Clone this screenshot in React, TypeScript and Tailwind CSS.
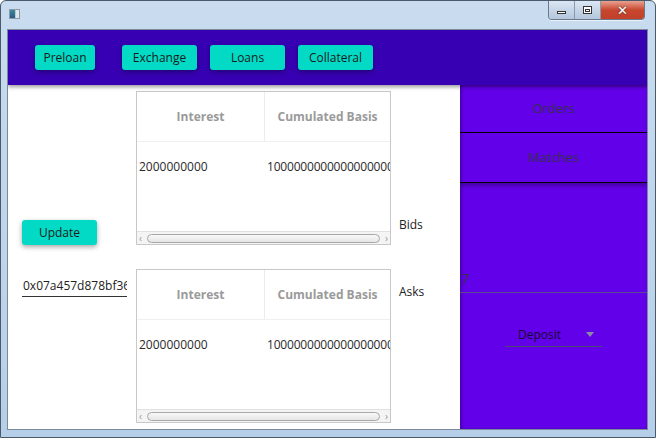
import React from "react";

const font = { fontFamily: '"Open Sans", "Noto Sans", "DejaVu Sans", sans-serif' };

function Table() {
  return (
    <div className="w-[255px] h-[154px] border border-[#c8c8c8] bg-white flex flex-col overflow-hidden">
      <div className="flex h-[50px] border-b border-[#f0f0f0] shrink-0">
        <div className="w-[128px] shrink-0 border-r border-[#ececec] flex items-center justify-center text-[12px] font-bold text-[#9a9a9a]">
          Interest
        </div>
        <div className="flex-1 flex items-center justify-center text-[12px] font-bold text-[#9a9a9a] whitespace-nowrap">
          Cumulated Basis
        </div>
      </div>
      <div className="flex-1 relative overflow-hidden">
        <div className="flex h-[50px] items-center text-[12px] text-[#2a2a2a] whitespace-nowrap">
          <div className="w-[128px] shrink-0 pl-[2px]">2000000000</div>
          <div className="shrink-0 pl-[2px] tracking-[-0.2px]">1000000000000000000</div>
        </div>
      </div>
      <div className="h-[13px] shrink-0 bg-[#f4f4f4] border-t border-[#e0e0e0] flex items-center px-[2px] gap-[2px]">
        <span className="text-[10px] leading-none text-[#9a9a9a] w-[6px]">‹</span>
        <div className="flex-1 h-[9px] rounded-[5px] border border-[#a8a8a8] bg-gradient-to-b from-[#f8f8f8] to-[#e6e6e6]" />
        <span className="text-[10px] leading-none text-[#9a9a9a] w-[6px] text-right">›</span>
      </div>
    </div>
  );
}

function TealButton({ label, w }: { label: string; w: string }) {
  return (
    <div
      className={`${w} h-[25px] shrink-0 rounded-[3px] bg-[#03dac5] flex items-center justify-center text-[12px] text-[#1a1a1a] shadow-[0_2px_5px_rgba(0,0,0,0.35)]`}
    >
      {label}
    </div>
  );
}

export default function App() {
  return (
    <div className="w-[656px] h-[438px] overflow-hidden bg-white" style={font}>
      <div className="w-[656px] h-[438px] rounded-t-[6px] border border-[#4a5a6a] bg-gradient-to-b from-[#c9dcef] to-[#b6cfe8] flex flex-col overflow-hidden">
        {/* title bar */}
        <div className="h-[28px] shrink-0 flex items-start justify-between relative">
          <div className="mt-[8px] ml-[8px] w-[11px] h-[10px] border border-[#8c9aa8] bg-white flex">
            <div className="w-[5px] h-full bg-gradient-to-b from-[#3a8a9a] to-[#2a5a8a]" />
            <div className="w-[1px] h-full bg-[#c0c8d0]" />
            <div className="flex-1 h-full bg-[#dfe8ef]" />
          </div>
          <div className="flex mr-[10px] h-[19px] rounded-b-[4px] overflow-hidden border border-t-0 border-[#6a7a8c] shadow-[0_1px_0_rgba(255,255,255,0.6)]">
            <div className="w-[26px] h-full bg-gradient-to-b from-[#dbe6f2] to-[#b3c6dc] border-r border-[#8a9aac] flex items-center justify-center">
              <div className="w-[9px] h-[3px] border border-[#333] bg-white mt-[5px]" />
            </div>
            <div className="w-[26px] h-full bg-gradient-to-b from-[#dbe6f2] to-[#b3c6dc] border-r border-[#8a9aac] flex items-center justify-center">
              <div className="w-[9px] h-[8px] border border-[#333] bg-white flex items-center justify-center">
                <div className="w-[5px] h-[3px] border border-[#333]" />
              </div>
            </div>
            <div className="w-[43px] h-full bg-gradient-to-b from-[#e8a090] via-[#c8462e] to-[#c0402a] flex items-center justify-center">
              <span className="text-white font-bold text-[13px] leading-none" style={{ fontFamily: '"DejaVu Sans", sans-serif', textShadow: "0 0 2px #333" }}>
                ✕
              </span>
            </div>
          </div>
        </div>
        {/* middle */}
        <div className="flex flex-1 min-h-0">
          <div className="w-[6px] shrink-0" />
          <div className="w-[641px] shrink-0 flex flex-col border border-[#7a8a9a] bg-white overflow-hidden">
            {/* header */}
            <div className="h-[55px] shrink-0 bg-[#3700b3] flex items-center pl-[27px] gap-[13px] relative z-10 shadow-[0_2px_4px_rgba(0,0,0,0.4)]">
              <div className="mr-[14px]">
                <TealButton label="Preloan" w="w-[60px]" />
              </div>
              <TealButton label="Exchange" w="w-[75px]" />
              <TealButton label="Loans" w="w-[75px]" />
              <TealButton label="Collateral" w="w-[75px]" />
            </div>
            {/* body */}
            <div className="flex flex-1 min-h-0">
              <div className="w-[452px] shrink-0 flex bg-white">
                <div className="w-[128px] shrink-0 pl-[14px] flex flex-col">
                  <div className="mt-[135px]">
                    <TealButton label="Update" w="w-[75px]" />
                  </div>
                  <div className="mt-[31px] w-[105px] h-[21px] border-b border-[#333] flex items-center overflow-hidden whitespace-nowrap text-[12px] text-[#222] pl-[1px]">
                    0x07a457d878bf363
                  </div>
                </div>
                <div className="w-[255px] shrink-0 flex flex-col pt-[6px] gap-[24px]">
                  <Table />
                  <Table />
                </div>
                <div className="flex-1 pl-[8px] flex flex-col text-[12px] text-[#222]">
                  <div className="mt-[131px]">Bids</div>
                  <div className="mt-[49px]">Asks</div>
                </div>
              </div>
              <div className="flex-1 bg-[#6200ea] flex flex-col relative shadow-[inset_2px_0_3px_rgba(0,0,0,0.25)] overflow-hidden">
                <div className="h-[48px] shrink-0 border-b border-black flex items-center justify-center text-[13px] text-[#35304a]">
                  Orders
                </div>
                <div className="h-[50px] shrink-0 border-b border-black flex items-center justify-center text-[13px] text-[#35304a] shadow-[0_3px_4px_rgba(0,0,0,0.3)]">
                  Matches
                </div>
                <div className="h-[110px] shrink-0 border-b border-[#5a4a90] relative">
                  <span className="absolute left-[1px] bottom-[6px] text-[15px] leading-none text-[#35304a]">7</span>
                </div>
                <div className="flex justify-center pt-[30px]">
                  <div className="w-[97px] h-[24px] border-b border-[#4a4a6a] flex items-center justify-between pl-[13px] pr-[8px]">
                    <span className="text-[12px] text-[#150a30]">Deposit</span>
                    <svg width="8" height="5" viewBox="0 0 8 5">
                      <path d="M0 0 L8 0 L4 5 Z" fill="#8a8aa0" />
                    </svg>
                  </div>
                </div>
              </div>
            </div>
          </div>
          <div className="flex-1" />
        </div>
        <div className="h-[7px] shrink-0" />
      </div>
    </div>
  );
}
